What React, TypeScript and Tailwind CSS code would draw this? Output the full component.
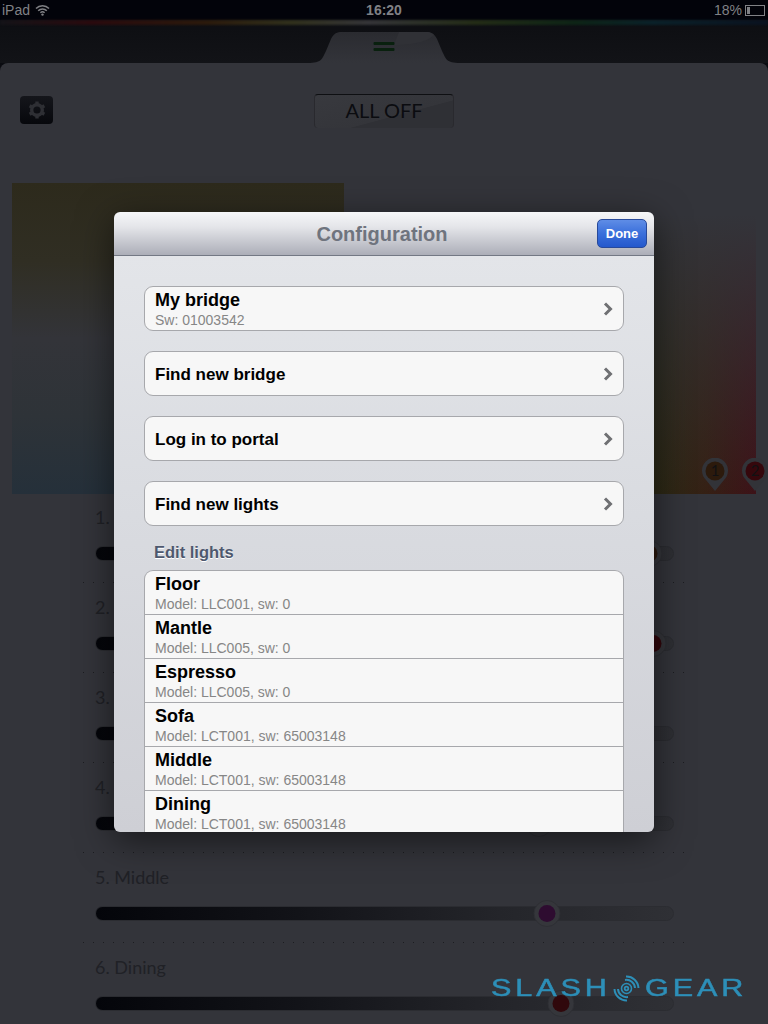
const sans = "font-['Liberation_Sans',Arial,sans-serif]";
const gill = "font-['Lato',sans-serif]";

const rows = [
  { label: "1. Floor", thumb: 553, fill: "bg-[#2a170c]" },
  { label: "2. Mantle", thumb: 557, fill: "bg-[#31060b]" },
  { label: "3. Espresso", thumb: 300, fill: "bg-[#2a170c]" },
  { label: "4. Sofa", thumb: 443, fill: "bg-[#282016]" },
  { label: "5. Middle", thumb: 451, fill: "bg-[#2e0c30]" },
  { label: "6. Dining", thumb: 465, fill: "bg-[#30080c]" },
];

function Slider({ thumb, fill }: { thumb: number; fill: string }) {
  return (
    <div className="relative h-[15px] w-[579px] rounded-full border border-[#2b2c31] bg-[linear-gradient(90deg,#04050a_0%,#121318_35%,#24252a_70%,#2f3035_100%)]">
      <div
        className="absolute top-[-7px] flex h-[27px] w-[27px] -translate-x-1/2 items-center justify-center rounded-full border border-[#2e2f34] bg-[#35363b]"
        style={{ left: thumb }}
      >
        <div className={`h-[17px] w-[17px] rounded-full ${fill}`} />
      </div>
    </div>
  );
}

function Dots() {
  return <div className="ml-[-12px] h-px w-[603px] bg-[repeating-linear-gradient(90deg,#1b1c20_0_1px,transparent_1px_10px)]" />;
}

function Pin({ n, fill }: { n: string; fill: string }) {
  return (
    <svg width="28" height="34" viewBox="0 0 28 34">
      <path d="M14 33 L5 22 A13 13 0 1 1 23 22 Z" fill="#323338" />
      <circle cx="14" cy="13" r="9.5" fill={fill} />
      <text x="14" y="18" textAnchor="middle" fontSize="15" fill="#111113" fontFamily="Lato, sans-serif">
        {n}
      </text>
    </svg>
  );
}

function Chevron() {
  return (
    <svg width="10" height="14" viewBox="0 0 10 14" className="shrink-0">
      <path d="M2 1.5 L7.5 7 L2 12.5" fill="none" stroke="#6f7073" strokeWidth="3" />
    </svg>
  );
}

function Card({ title, sub }: { title: string; sub?: string }) {
  return (
    <div className="flex h-[45px] w-[480px] items-center justify-between rounded-[9px] border border-[#a7a8ac] bg-[#f7f7f7] pl-[10px] pr-[10px]">
      <div className={`flex flex-col ${sub ? "" : "pt-[2px]"}`}>
        <span className={`font-bold text-black ${sub ? "text-[18px] leading-[20px]" : "text-[17px] leading-[22px]"}`}>{title}</span>
        {sub && <span className="mt-[2px] text-[14px] leading-[16px] text-[#868686]">{sub}</span>}
      </div>
      <Chevron />
    </div>
  );
}

const lights = [
  ["Floor", "Model: LLC001, sw: 0"],
  ["Mantle", "Model: LLC005, sw: 0"],
  ["Espresso", "Model: LLC005, sw: 0"],
  ["Sofa", "Model: LCT001, sw: 65003148"],
  ["Middle", "Model: LCT001, sw: 65003148"],
  ["Dining", "Model: LCT001, sw: 65003148"],
];

function Modal() {
  return (
    <div className={`absolute left-[114px] top-[212px] flex h-[620px] w-[540px] flex-col overflow-hidden rounded-[6px] shadow-[0_8px_36px_rgba(0,0,0,0.55)] ${sans}`}>
      <div className="relative flex h-[44px] shrink-0 items-center justify-center border-b border-[#737884] bg-[linear-gradient(180deg,#f6f7f9_0%,#e4e5e9_35%,#acaeb8_100%)]">
        <span className="mr-[4px] text-[20px] font-bold text-[#6f747e]">Configuration</span>
        <div className="absolute right-[7px] top-[7px] flex h-[29px] w-[50px] items-center justify-center rounded-[5px] border border-[#27499a] bg-[linear-gradient(180deg,#5f8de6_0%,#3a6fdb_50%,#2458cc_100%)] text-[13px] font-bold text-white">
          Done
        </div>
      </div>
      <div className="flex min-h-0 flex-1 flex-col items-center bg-[linear-gradient(180deg,#e3e5e9_0%,#d9dbe0_45%,#cecfd5_100%)] pt-[30px]">
        <div className="flex flex-col gap-[20px]">
          <Card title="My bridge" sub="Sw: 01003542" />
          <Card title="Find new bridge" />
          <Card title="Log in to portal" />
          <Card title="Find new lights" />
        </div>
        <div className="mt-[16px] h-[28px] w-[480px] pl-[10px] text-[16.5px] font-bold leading-[20px] text-[#4e586e] [text-shadow:0_1px_0_#ffffff]">
          Edit lights
        </div>
        <div className="w-[480px] flex-1 overflow-hidden rounded-t-[9px] border border-b-0 border-[#a7a8ac] bg-[#f7f7f7]">
          {lights.map(([t, s], i) => (
            <div key={t} className={`h-[44px] pl-[10px] pt-[2px] ${i < lights.length - 1 ? "border-b border-[#a7a8ac]" : ""}`}>
              <div className="text-[18px] font-bold leading-[22px] text-black">{t}</div>
              <div className="text-[14px] leading-[18px] text-[#868686]">{s}</div>
            </div>
          ))}
        </div>
      </div>
    </div>
  );
}

function Watermark() {
  return (
    <div className={`absolute left-[491px] top-[971px] flex items-center text-[23.5px] leading-[34px] text-[#2d8fb8] [-webkit-text-stroke:0.5px_#2d8fb8] ${sans}`}>
      <span className="block w-[122px] origin-left scale-x-[1.3] whitespace-nowrap tracking-[3px]">SLASH</span>
      <svg width="27" height="27" viewBox="0 0 27 27" className="shrink-0">
        <g fill="none" stroke="#2d8fb8">
          <circle cx="13.5" cy="13.5" r="1.8" strokeWidth="1.8" />
          <circle cx="13.5" cy="13.5" r="5" strokeWidth="1.6" />
          <path d="M12 5 A 8.6 8.6 0 0 1 22 13 M15 22 A 8.6 8.6 0 0 1 5 14" strokeWidth="2" />
          <path d="M13 1.5 A 12 12 0 0 1 25.5 13 M14 25.5 A 12 12 0 0 1 1.5 14" strokeWidth="2" />
        </g>
      </svg>
      <span className="ml-[5px] block w-[100px] origin-left scale-x-[1.3] whitespace-nowrap tracking-[3px]">GEAR</span>
    </div>
  );
}

export default function App() {
  return (
    <div className="relative h-[1024px] w-[768px] overflow-hidden bg-[#0a0b10]">
      <div className={`flex h-[20px] items-center justify-between bg-[#02030a] px-[2px] text-[14px] text-[#808185] ${sans}`}>
        <div className="flex items-center gap-[5px]">
          <span>iPad</span>
          <svg width="15" height="12" viewBox="0 0 15 12">
            <path d="M1 4.5 A9 9 0 0 1 14 4.5 M3.2 6.7 A6 6 0 0 1 11.8 6.7 M5.4 8.8 A3 3 0 0 1 9.6 8.8" fill="none" stroke="#808185" strokeWidth="1.5" />
            <circle cx="7.5" cy="10.6" r="1.2" fill="#808185" />
          </svg>
        </div>
        <span className="absolute left-1/2 -translate-x-1/2 font-bold">16:20</span>
        <div className="flex items-center gap-[3px]">
          <span>18%</span>
          <div className="relative mr-[1px] h-[11px] w-[20px] border border-[#808185] p-px">
            <div className="h-full w-[3px] bg-[#808185]" />
          </div>
        </div>
      </div>

      <div className="relative h-[43px] bg-[linear-gradient(180deg,#0d0e12_0%,#121317_100%)]">
        <div className="h-[5px] bg-[linear-gradient(90deg,#141318_0%,#2a0a0e_12%,#2b1a0c_27%,#30301c_38%,#343438_48%,#232c16_62%,#0d2416_75%,#0a2129_85%,#0a1220_100%)] blur-[1px]" />
        <svg width="160" height="32" viewBox="0 0 160 32" className="absolute left-[304px] top-[11px]">
          <defs>
            <linearGradient id="tabFill" x1="0" y1="0" x2="0" y2="1">
              <stop offset="0" stopColor="#2a2b30" />
              <stop offset="1" stopColor="#33343a" />
            </linearGradient>
          </defs>
          <path d="M4 32 C 18 32 18 28 22 20 L 27 8 C 30 2 33 1 38 1 L 122 1 C 127 1 130 2 133 8 L 138 20 C 142 28 142 32 156 32 Z" fill="url(#tabFill)" />
          <path d="M90 14 C 105 14 122 12 130 4 C 127 1.500 125 1 122 1 L 95 1 Z" fill="#303136" />
          <rect x="69.5" y="11" width="21" height="3" rx="1" fill="#09200e" />
          <rect x="69.5" y="17" width="21" height="3" rx="1" fill="#09200e" />
        </svg>
      </div>

      <div className="h-[961px] rounded-t-[8px] bg-[#33343a]">
        <div className="relative flex h-[120px] items-start justify-center pt-[31px]">
          <div className="absolute left-[20px] top-[33px] flex h-[28px] w-[33px] items-center justify-center rounded-[4px] bg-[linear-gradient(180deg,#15161b_0%,#07080c_100%)]">
            <svg width="18" height="18" viewBox="0 0 18 18">
              <circle cx="9" cy="9" r="5.3" fill="none" stroke="#2e2f34" strokeWidth="3.4" />
              <g fill="#2e2f34">
                <rect x="7.300" y="0.500" width="3.400" height="3" />
                <rect x="7.300" y="14.500" width="3.400" height="3" />
                <rect x="7.300" y="0.500" width="3.400" height="3" transform="rotate(60 9 9)" />
                <rect x="7.300" y="14.500" width="3.400" height="3" transform="rotate(60 9 9)" />
                <rect x="7.300" y="0.500" width="3.400" height="3" transform="rotate(120 9 9)" />
                <rect x="7.300" y="14.500" width="3.400" height="3" transform="rotate(120 9 9)" />
              </g>
            </svg>
          </div>
          <div className={`flex h-[34px] w-[140px] items-center justify-center rounded-[4px] border border-b-0 border-x-[#29292e] border-t-[#0e0f12] bg-[linear-gradient(165deg,#38393e_0%,#34353a_60%,#2f3035_61%,#2f3035_100%)] pb-[3px] text-[20px] text-[#0b0c10] ${gill}`}>
            ALL OFF
          </div>
        </div>

        <div className="relative ml-[12px] flex h-[311px] w-[744px]">
          <div className="h-full w-[332px] bg-[linear-gradient(180deg,#2d2a1c_0%,#302e23_25%,#333439_50%,#2e3338_75%,#25303a_100%)]" />
          <div className="h-full flex-1 bg-[linear-gradient(180deg,#33343a_0%,#33343a_10%,#33343a00_100%),linear-gradient(90deg,#21302c_0%,#2c2b16_75%,#352014_88%,#3d1218_100%)]" />
          <div className="absolute left-[689px] top-[275px]"><Pin n="1" fill="#2c1a0c" /></div>
          <div className="absolute left-[729px] top-[275px]"><Pin n="2" fill="#35070c" /></div>
        </div>

        <div className="ml-[95px] mt-[11px] flex w-[579px] flex-col">
          {rows.map((r, i) => (
            <div key={r.label} className="h-[90px]">
              <div className={`h-[24px] text-[18px] leading-[24px] text-[#202126] ${gill}`}>{r.label}</div>
              <div className="mt-[17px]">
                <Slider thumb={r.thumb} fill={r.fill} />
              </div>
              {i < 5 && (
                <div className="mt-[21px]">
                  <Dots />
                </div>
              )}
            </div>
          ))}
        </div>
      </div>

      <Modal />
      <Watermark />
    </div>
  );
}
